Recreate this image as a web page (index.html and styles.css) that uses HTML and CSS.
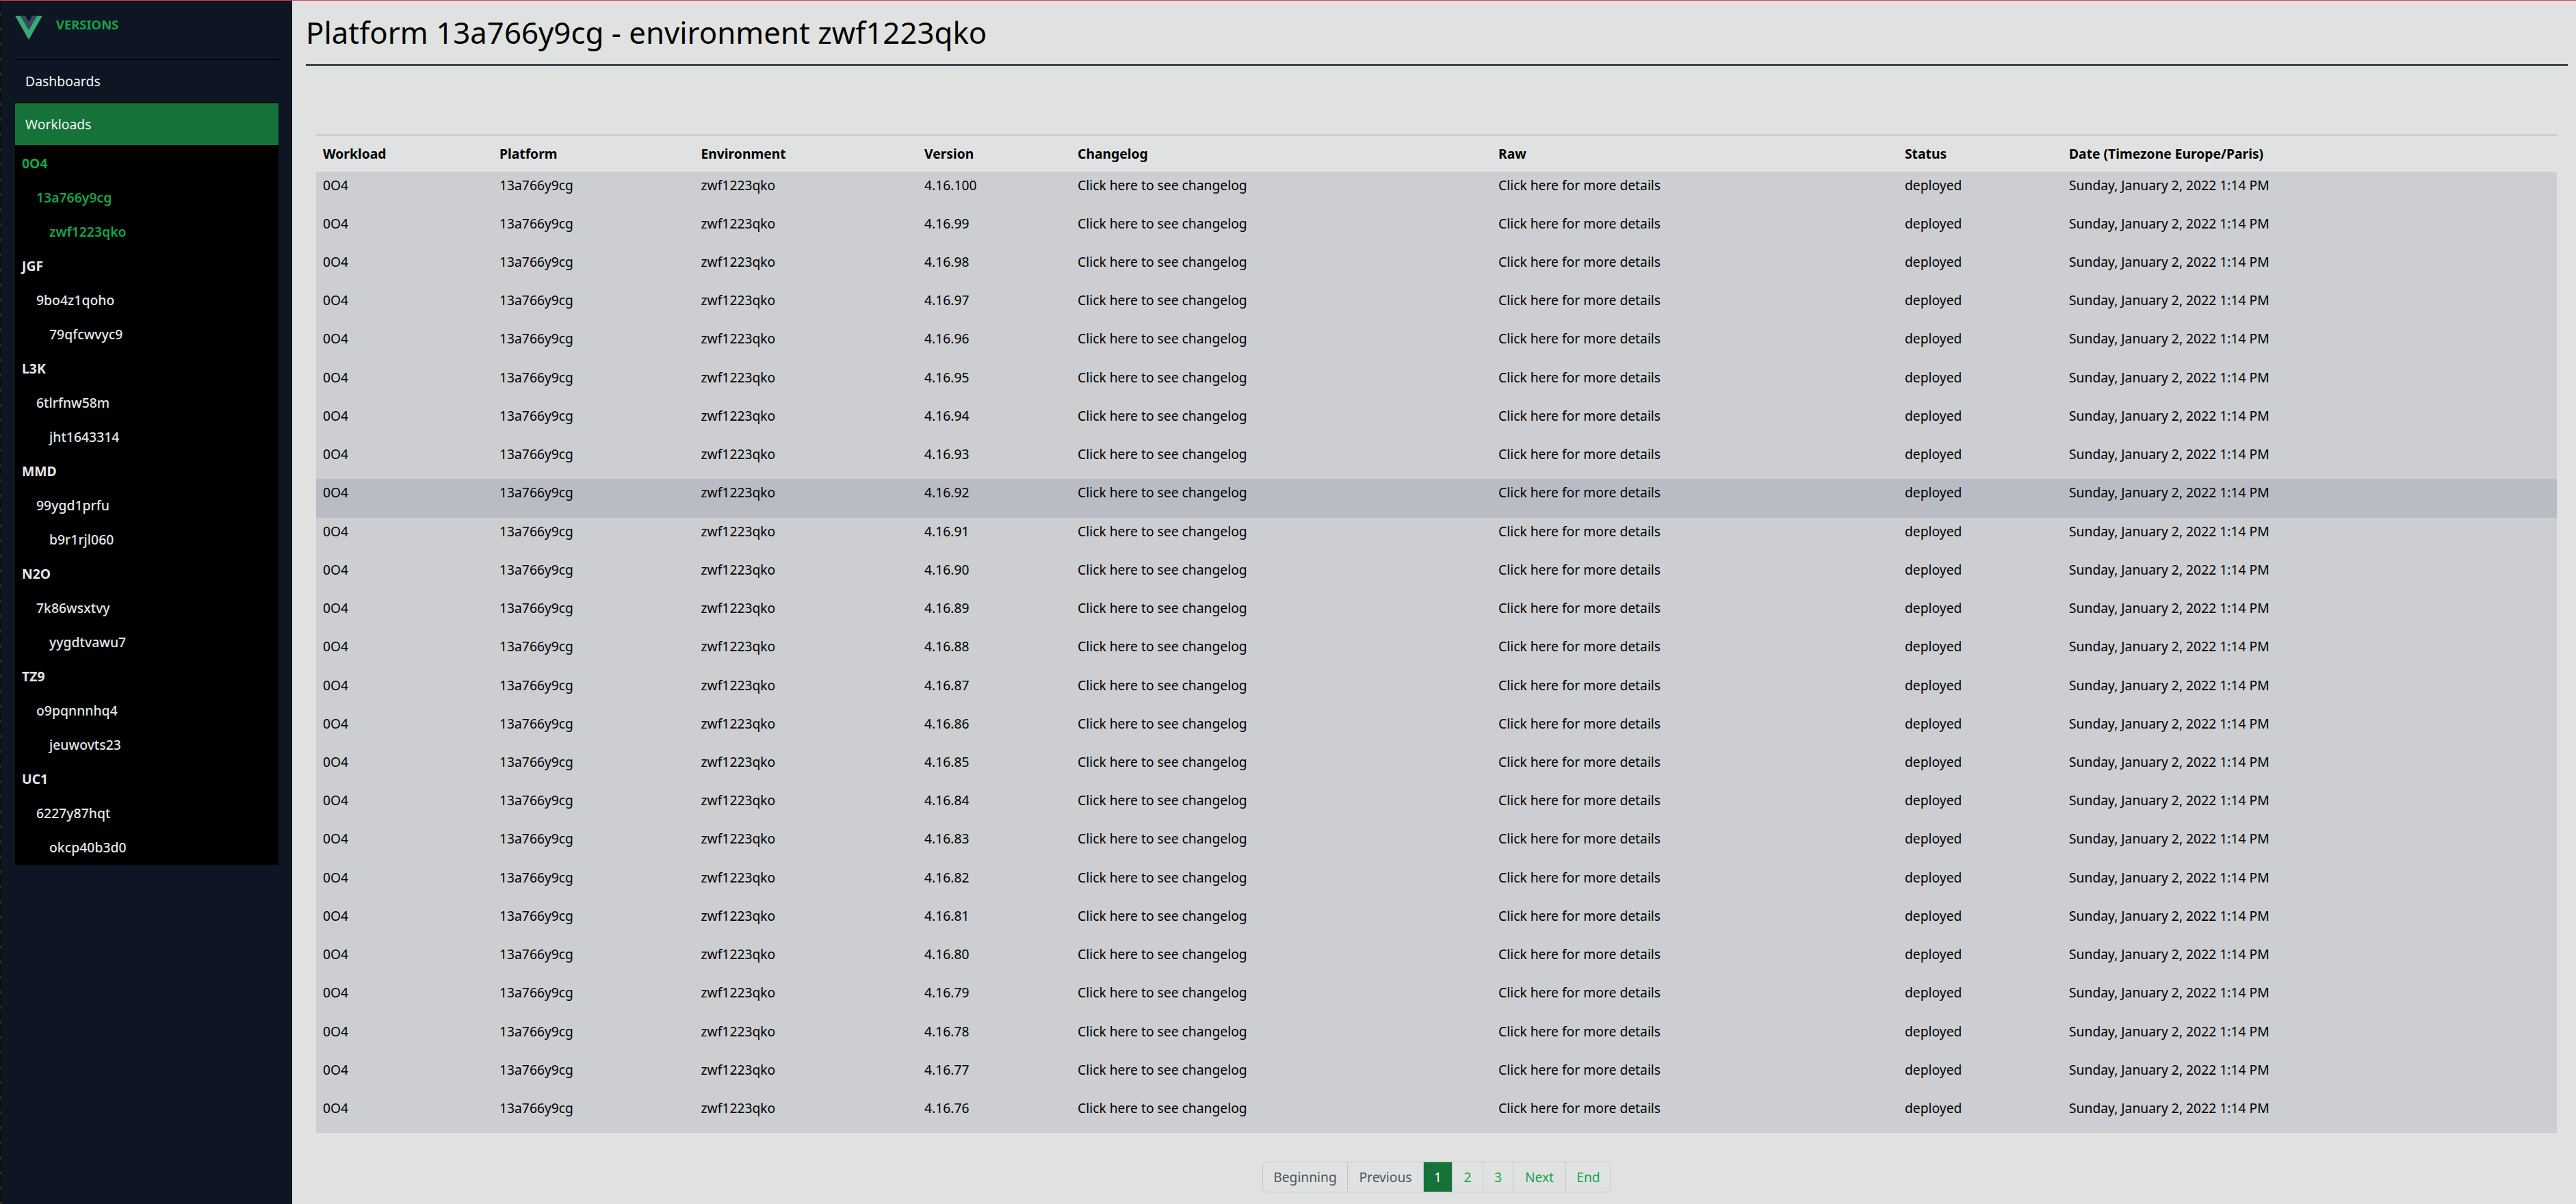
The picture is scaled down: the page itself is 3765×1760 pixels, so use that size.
FILE: index.html
```html
<!DOCTYPE html>
<html lang="en">
<head>
<meta charset="utf-8">
<title>Versions</title>
<link rel="stylesheet" href="styles.css">
</head>
<body>
<div class="app">
  <aside class="sidebar">
    <div class="brand">
      <svg class="logo" viewBox="0 0 40 35" width="40" height="35" aria-hidden="true">
        <path d="M0 0H8L20 20.5L32 0H40L20 35Z" fill="#3aa776"/>
        <path d="M8 0H15L20 9L25 0H32L20 20.5Z" fill="#35495e"/>
      </svg>
      <span class="brand-name">VERSIONS</span>
    </div>
    <nav class="nav">
      <a class="nav-link">Dashboards</a>
      <a class="nav-link active">Workloads</a>
      <ul class="tree">
        <li class="l1 on">0O4</li><li class="l2 on">13a766y9cg</li><li class="l3 on">zwf1223qko</li>
        <li class="l1">JGF</li><li class="l2">9bo4z1qoho</li><li class="l3">79qfcwvyc9</li>
        <li class="l1">L3K</li><li class="l2">6tlrfnw58m</li><li class="l3">jht1643314</li>
        <li class="l1">MMD</li><li class="l2">99ygd1prfu</li><li class="l3">b9r1rjl060</li>
        <li class="l1">N2O</li><li class="l2">7k86wsxtvy</li><li class="l3">yygdtvawu7</li>
        <li class="l1">TZ9</li><li class="l2">o9pqnnnhq4</li><li class="l3">jeuwovts23</li>
        <li class="l1">UC1</li><li class="l2">6227y87hqt</li><li class="l3">okcp40b3d0</li>
      </ul>
    </nav>
  </aside>
  <main class="main">
    <h1 class="title">Platform 13a766y9cg - environment zwf1223qko</h1>
    <table class="table">
      <colgroup>
        <col class="c1"><col class="c2"><col class="c3"><col class="c4"><col class="c5"><col class="c6"><col class="c7"><col class="c8">
      </colgroup>
      <thead><tr><th>Workload</th><th>Platform</th><th>Environment</th><th>Version</th><th>Changelog</th><th>Raw</th><th>Status</th><th>Date (Timezone Europe/Paris)</th></tr></thead>
      <tbody>
        <tr><td>0O4</td><td>13a766y9cg</td><td>zwf1223qko</td><td>4.16.100</td><td>Click here to see changelog</td><td>Click here for more details</td><td>deployed</td><td>Sunday, January 2, 2022 1:14 PM</td></tr>
        <tr><td>0O4</td><td>13a766y9cg</td><td>zwf1223qko</td><td>4.16.99</td><td>Click here to see changelog</td><td>Click here for more details</td><td>deployed</td><td>Sunday, January 2, 2022 1:14 PM</td></tr>
        <tr><td>0O4</td><td>13a766y9cg</td><td>zwf1223qko</td><td>4.16.98</td><td>Click here to see changelog</td><td>Click here for more details</td><td>deployed</td><td>Sunday, January 2, 2022 1:14 PM</td></tr>
        <tr><td>0O4</td><td>13a766y9cg</td><td>zwf1223qko</td><td>4.16.97</td><td>Click here to see changelog</td><td>Click here for more details</td><td>deployed</td><td>Sunday, January 2, 2022 1:14 PM</td></tr>
        <tr><td>0O4</td><td>13a766y9cg</td><td>zwf1223qko</td><td>4.16.96</td><td>Click here to see changelog</td><td>Click here for more details</td><td>deployed</td><td>Sunday, January 2, 2022 1:14 PM</td></tr>
        <tr><td>0O4</td><td>13a766y9cg</td><td>zwf1223qko</td><td>4.16.95</td><td>Click here to see changelog</td><td>Click here for more details</td><td>deployed</td><td>Sunday, January 2, 2022 1:14 PM</td></tr>
        <tr><td>0O4</td><td>13a766y9cg</td><td>zwf1223qko</td><td>4.16.94</td><td>Click here to see changelog</td><td>Click here for more details</td><td>deployed</td><td>Sunday, January 2, 2022 1:14 PM</td></tr>
        <tr><td>0O4</td><td>13a766y9cg</td><td>zwf1223qko</td><td>4.16.93</td><td>Click here to see changelog</td><td>Click here for more details</td><td>deployed</td><td>Sunday, January 2, 2022 1:14 PM</td></tr>
        <tr class="hover"><td>0O4</td><td>13a766y9cg</td><td>zwf1223qko</td><td>4.16.92</td><td>Click here to see changelog</td><td>Click here for more details</td><td>deployed</td><td>Sunday, January 2, 2022 1:14 PM</td></tr>
        <tr><td>0O4</td><td>13a766y9cg</td><td>zwf1223qko</td><td>4.16.91</td><td>Click here to see changelog</td><td>Click here for more details</td><td>deployed</td><td>Sunday, January 2, 2022 1:14 PM</td></tr>
        <tr><td>0O4</td><td>13a766y9cg</td><td>zwf1223qko</td><td>4.16.90</td><td>Click here to see changelog</td><td>Click here for more details</td><td>deployed</td><td>Sunday, January 2, 2022 1:14 PM</td></tr>
        <tr><td>0O4</td><td>13a766y9cg</td><td>zwf1223qko</td><td>4.16.89</td><td>Click here to see changelog</td><td>Click here for more details</td><td>deployed</td><td>Sunday, January 2, 2022 1:14 PM</td></tr>
        <tr><td>0O4</td><td>13a766y9cg</td><td>zwf1223qko</td><td>4.16.88</td><td>Click here to see changelog</td><td>Click here for more details</td><td>deployed</td><td>Sunday, January 2, 2022 1:14 PM</td></tr>
        <tr><td>0O4</td><td>13a766y9cg</td><td>zwf1223qko</td><td>4.16.87</td><td>Click here to see changelog</td><td>Click here for more details</td><td>deployed</td><td>Sunday, January 2, 2022 1:14 PM</td></tr>
        <tr><td>0O4</td><td>13a766y9cg</td><td>zwf1223qko</td><td>4.16.86</td><td>Click here to see changelog</td><td>Click here for more details</td><td>deployed</td><td>Sunday, January 2, 2022 1:14 PM</td></tr>
        <tr><td>0O4</td><td>13a766y9cg</td><td>zwf1223qko</td><td>4.16.85</td><td>Click here to see changelog</td><td>Click here for more details</td><td>deployed</td><td>Sunday, January 2, 2022 1:14 PM</td></tr>
        <tr><td>0O4</td><td>13a766y9cg</td><td>zwf1223qko</td><td>4.16.84</td><td>Click here to see changelog</td><td>Click here for more details</td><td>deployed</td><td>Sunday, January 2, 2022 1:14 PM</td></tr>
        <tr><td>0O4</td><td>13a766y9cg</td><td>zwf1223qko</td><td>4.16.83</td><td>Click here to see changelog</td><td>Click here for more details</td><td>deployed</td><td>Sunday, January 2, 2022 1:14 PM</td></tr>
        <tr><td>0O4</td><td>13a766y9cg</td><td>zwf1223qko</td><td>4.16.82</td><td>Click here to see changelog</td><td>Click here for more details</td><td>deployed</td><td>Sunday, January 2, 2022 1:14 PM</td></tr>
        <tr><td>0O4</td><td>13a766y9cg</td><td>zwf1223qko</td><td>4.16.81</td><td>Click here to see changelog</td><td>Click here for more details</td><td>deployed</td><td>Sunday, January 2, 2022 1:14 PM</td></tr>
        <tr><td>0O4</td><td>13a766y9cg</td><td>zwf1223qko</td><td>4.16.80</td><td>Click here to see changelog</td><td>Click here for more details</td><td>deployed</td><td>Sunday, January 2, 2022 1:14 PM</td></tr>
        <tr><td>0O4</td><td>13a766y9cg</td><td>zwf1223qko</td><td>4.16.79</td><td>Click here to see changelog</td><td>Click here for more details</td><td>deployed</td><td>Sunday, January 2, 2022 1:14 PM</td></tr>
        <tr><td>0O4</td><td>13a766y9cg</td><td>zwf1223qko</td><td>4.16.78</td><td>Click here to see changelog</td><td>Click here for more details</td><td>deployed</td><td>Sunday, January 2, 2022 1:14 PM</td></tr>
        <tr><td>0O4</td><td>13a766y9cg</td><td>zwf1223qko</td><td>4.16.77</td><td>Click here to see changelog</td><td>Click here for more details</td><td>deployed</td><td>Sunday, January 2, 2022 1:14 PM</td></tr>
        <tr><td>0O4</td><td>13a766y9cg</td><td>zwf1223qko</td><td>4.16.76</td><td>Click here to see changelog</td><td>Click here for more details</td><td>deployed</td><td>Sunday, January 2, 2022 1:14 PM</td></tr>
      </tbody>
    </table>
    <nav class="pager">
      <a class="pg muted first w-begin">Beginning</a><a class="pg muted w-prev">Previous</a><a class="pg current w-n1">1</a><a class="pg w-n2">2</a><a class="pg w-n3">3</a><a class="pg w-next">Next</a><a class="pg last w-end">End</a>
    </nav>
  </main>
</div>
</body>
</html>
```
FILE: styles.css
```css
* { box-sizing: border-box; }
html, body { margin: 0; height: 100%; }
body {
  font-family: "Noto Sans", "Open Sans", sans-serif;
  background: #e0e2e1;
  color: #000;
  overflow: hidden;
}
.app {
  display: flex;
  height: 1760px;
  border-top: 1px solid #c9484c;
}
.sidebar {
  width: 427px;
  flex: none;
  background: repeating-linear-gradient(to bottom, #0a0d12 0 17px, #33291f 17px 22px) left top / 2px 100% no-repeat, #0f1623;
  padding: 0 20px 0 22px;
}
.brand {
  display: flex;
  align-items: flex-start;
  height: 87px;
  padding-top: 22px;
  border-bottom: 2px solid #000;
}
.logo { flex: none; }
.brand-name {
  margin-left: 20px;
  margin-top: 0;
  color: #16a34a;
  font-size: 18.4px;
  font-weight: 700;
  line-height: 26px;
}
.nav-link {
  display: flex;
  align-items: center;
  height: 63px;
  padding-left: 15px;
  color: #f3f4f6;
  font-size: 19.4px;
  border-bottom: 2px solid #000;
}
.nav-link.active { background: #15733a; height: 61px; border-bottom: 0; }
.tree {
  list-style: none;
  margin: 0;
  padding: 2px 0 0;
  background: #000;
}
.tree li {
  height: 50px;
  line-height: 50px;
  font-size: 19.4px;
  font-weight: 500;
  color: #e5e7eb;
}
.tree .l1 { padding-left: 10px; font-weight: 700; }
.tree .l2 { padding-left: 31px; }
.tree .l3 { padding-left: 50px; }
.tree li.on { color: #16a34a; font-weight: 700; }
.tree li.l3.on, .tree li.l2.on { font-weight: 600; }
.main {
  flex: 1;
  min-width: 0;
  padding: 0 12px 0 20px;
}
.title {
  margin: 0;
  height: 95px;
  padding-top: 16px;
  border-bottom: 2px solid #0f1623;
  font-size: 43.8px;
  font-weight: 400;
  line-height: 60px;
}
.table {
  table-layout: fixed;
  border-collapse: collapse;
  width: 3275px;
  margin: 100px 0 0 15px;
  font-size: 19.3px;
}
.c1 { width: 258px; }
.c2 { width: 294.5px; }
.c3 { width: 326.5px; }
.c4 { width: 224px; }
.c5 { width: 615px; }
.c6 { width: 594px; }
.c7 { width: 240px; }
.c8 { width: 723px; }
th {
  height: 53px;
  border-top: 3px solid #cdced2;
  padding: 0 10px;
  text-align: left;
  font-weight: 700;
  vertical-align: middle;
}
td {
  height: 56.24px;
  padding: 7px 10px 0;
  vertical-align: top;
  line-height: 26px;
  background: #cdced2;
  white-space: nowrap;
}
.hover td { background: #babcc5; }
.pager {
  display: flex;
  margin: 42px 0 0 1398px;
  height: 45px;
}
.pg {
  display: flex;
  align-items: center;
  justify-content: center;
  height: 45px;
  border: 1px solid #c2c4cb;
  margin-right: -1px;
  font-size: 19.2px;
  color: #16a34a;
}
.muted { color: #4b5563; }
.current { background: #15733a; color: #fff; }
.first { border-radius: 6px 0 0 6px; }
.last { border-radius: 0 6px 6px 0; }
.w-begin { width: 125px; }
.w-prev { width: 112px; }
.w-n1 { width: 43px; }
.w-n2 { width: 46px; }
.w-n3 { width: 45px; }
.w-next { width: 78px; }
.w-end { width: 67px; }
```
